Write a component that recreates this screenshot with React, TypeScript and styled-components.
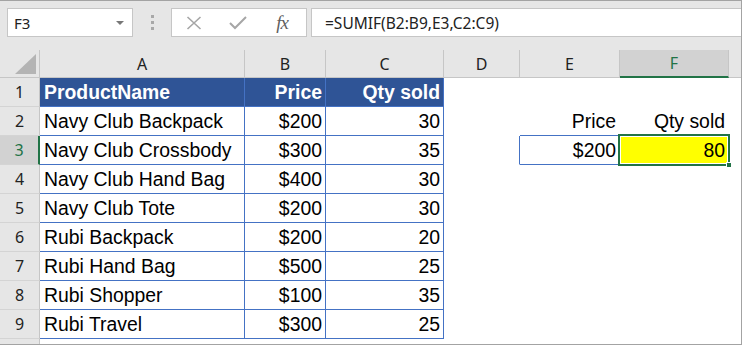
import React from "react";
import styled, { createGlobalStyle } from "styled-components";

const UI_FONT = `"Noto Sans", "Open Sans", sans-serif`;
const CELL_FONT = `"Liberation Sans", Arial, sans-serif`;
const GREEN = "#217346";
const BLUE = "#4472c4";
const HEAD_BLUE = "#2f5496";

const GlobalStyle = createGlobalStyle`
  html, body {
    margin: 0;
    padding: 0;
    background: #fff;
  }
  body {
    width: 742px;
    height: 345px;
    overflow: hidden;
  }
`;

const Frame = styled.div`
  width: 742px;
  height: 345px;
  box-sizing: border-box;
  border: 1px solid #a3a3a3;
  border-left: none;
  display: flex;
  flex-direction: column;
  background: #e6e6e6;
  overflow: hidden;
`;

const FormulaBar = styled.div`
  height: 49px;
  flex-shrink: 0;
  box-sizing: border-box;
  padding: 7px 0 0 7px;
  display: flex;
  align-items: flex-start;
`;

const NameBox = styled.div`
  width: 126px;
  height: 29px;
  box-sizing: border-box;
  background: #fff;
  border: 1px solid #c6c6c6;
  display: flex;
  align-items: center;
  justify-content: space-between;
  padding: 0 8px 0 6px;
  font: 15px ${UI_FONT};
  color: #222;
`;

const Caret = styled.span`
  width: 0;
  height: 0;
  border-left: 4px solid transparent;
  border-right: 4px solid transparent;
  border-top: 4px solid #777;
`;

const Grip = styled.div`
  width: 38px;
  height: 29px;
  display: flex;
  flex-direction: column;
  align-items: center;
  justify-content: center;
  gap: 3px;

  span {
    width: 3px;
    height: 3px;
    background: #a8a8a8;
  }
`;

const FxButtons = styled.div`
  width: 136px;
  height: 29px;
  box-sizing: border-box;
  background: #fff;
  border: 1px solid #c6c6c6;
  display: flex;
  align-items: center;
`;

const FxSlot = styled.div`
  width: 44px;
  height: 100%;
  display: flex;
  align-items: center;
  justify-content: center;
`;

const FxLabel = styled.span`
  font: italic 19px "Liberation Serif", serif;
  color: #5f5f5f;
  letter-spacing: -1px;
`;

const FormulaInput = styled.div`
  flex: 1;
  height: 29px;
  margin-left: 4px;
  box-sizing: border-box;
  background: #fff;
  border: 1px solid #c6c6c6;
  border-right: none;
  padding-left: 13px;
  display: flex;
  align-items: center;
  font: 15.5px ${UI_FONT};
  color: #222;
`;

const Sheet = styled.div`
  flex: 1;
  display: grid;
  grid-template-columns: 40px 205px 81px 118px 76px 100px 109px 1fr;
  grid-template-rows: 28px repeat(9, 29px) 1fr;
  background: #fff;
`;

const Corner = styled.div`
  background: #e6e6e6;
  border-right: 1px solid #c6c6c6;
  border-bottom: 1px solid #c6c6c6;
  display: flex;
  align-items: flex-end;
  justify-content: flex-end;
  padding: 0 3px 3px 0;
`;

const ColHead = styled.div<{ $selected?: boolean; $last?: boolean }>`
  background: ${({ $selected }) => ($selected ? "#d2d2d2" : "#e6e6e6")};
  border-right: ${({ $last }) => ($last ? "none" : "1px solid #c6c6c6")};
  border-bottom: ${({ $selected }) =>
    $selected ? `2px solid ${GREEN}` : "1px solid #c6c6c6"};
  display: flex;
  align-items: center;
  justify-content: center;
  font: 16px ${UI_FONT};
  color: ${({ $selected }) => ($selected ? GREEN : "#222")};
`;

const RowHead = styled.div<{ $selected?: boolean }>`
  background: ${({ $selected }) => ($selected ? "#d2d2d2" : "#e6e6e6")};
  border-right: ${({ $selected }) =>
    $selected ? `2px solid ${GREEN}` : "1px solid #c6c6c6"};
  border-bottom: 1px solid #d4d4d4;
  display: flex;
  align-items: center;
  justify-content: center;
  font: 16px ${UI_FONT};
  color: ${({ $selected }) => ($selected ? GREEN : "#222")};
`;

type CellProps = {
  $right?: boolean;
  $bold?: boolean;
  $bg?: string;
  $color?: string;
  $br?: string;
  $bb?: string;
  $active?: boolean;
};

const Cell = styled.div<CellProps>`
  position: ${({ $active }) => ($active ? "relative" : "static")};
  background: ${({ $bg }) => $bg ?? "#fff"};
  border-right: 1px solid ${({ $br }) => $br ?? "transparent"};
  border-bottom: 1px solid ${({ $bb }) => $bb ?? "transparent"};
  display: flex;
  align-items: center;
  justify-content: ${({ $right }) => ($right ? "flex-end" : "flex-start")};
  padding: ${({ $right }) => ($right ? "1px 3px 0 0" : "1px 0 0 4px")};
  font-family: ${CELL_FONT};
  font-size: 19.4px;
  font-weight: ${({ $bold }) => ($bold ? 700 : 400)};
  color: ${({ $color }) => $color ?? "#000"};
  white-space: nowrap;

  ${({ $active }) =>
    $active &&
    `
    &::after {
      content: "";
      position: absolute;
      top: -2px;
      left: -2px;
      right: -2px;
      bottom: -2px;
      border: 2px solid ${GREEN};
      box-shadow: inset 0 0 0 1px #fff;
      z-index: 1;
      pointer-events: none;
    }
    &::before {
      content: "";
      position: absolute;
      right: -4px;
      bottom: -4px;
      width: 6px;
      height: 6px;
      background: ${GREEN};
      border: 1px solid #fff;
      box-sizing: border-box;
      z-index: 2;
    }
  `}
`;

const Filler = styled.div`
  background: #fff;
`;

const BottomRowHead = styled.div`
  background: #e6e6e6;
  border-right: 1px solid #c6c6c6;
`;

const CancelIcon = () => (
  <svg width="16" height="14" viewBox="0 0 16 14">
    <path d="M1.5 1 L14.5 13 M14.5 1 L1.5 13" stroke="#a6a6a6" strokeWidth="1.6" fill="none" />
  </svg>
);

const EnterIcon = () => (
  <svg width="18" height="14" viewBox="0 0 18 14">
    <path d="M1 7 L6 12 L17 1" stroke="#a6a6a6" strokeWidth="2" fill="none" />
  </svg>
);

const CornerTriangle = () => (
  <svg width="21" height="20" viewBox="0 0 21 20">
    <polygon points="21,0 21,20 0,20" fill="#b4b4b4" />
  </svg>
);

const products: [string, string, string][] = [
  ["Navy Club Backpack", "$200", "30"],
  ["Navy Club Crossbody", "$300", "35"],
  ["Navy Club Hand Bag", "$400", "30"],
  ["Navy Club Tote", "$200", "30"],
  ["Rubi Backpack", "$200", "20"],
  ["Rubi Hand Bag", "$500", "25"],
  ["Rubi Shopper", "$100", "35"],
  ["Rubi Travel", "$300", "25"],
];

const columns = ["A", "B", "C", "D", "E", "F"];

const App = () => {
  const dataRows = products.map(([name, price, qty], i) => {
    const row = i + 2;
    return (
      <React.Fragment key={row}>
        <RowHead $selected={row === 3}>{row}</RowHead>
        <Cell $br={BLUE} $bb={BLUE}>{name}</Cell>
        <Cell $right $br={BLUE} $bb={BLUE}>{price}</Cell>
        <Cell $right $br={BLUE} $bb={BLUE}>{qty}</Cell>
        <Cell $br={row === 3 ? BLUE : undefined} />
        {row === 2 && <Cell $right $bb={BLUE}>Price</Cell>}
        {row === 2 && <Cell $right>Qty sold</Cell>}
        {row === 3 && <Cell $right $br={BLUE} $bb={BLUE}>$200</Cell>}
        {row === 3 && (
          <Cell $right $active $bg="#ffff00">
            80
          </Cell>
        )}
        {row > 3 && <Cell />}
        {row > 3 && <Cell />}
        <Filler />
      </React.Fragment>
    );
  });

  return (
    <>
      <GlobalStyle />
      <Frame>
        <FormulaBar>
          <NameBox>
            <span>F3</span>
            <Caret />
          </NameBox>
          <Grip>
            <span />
            <span />
            <span />
          </Grip>
          <FxButtons>
            <FxSlot>
              <CancelIcon />
            </FxSlot>
            <FxSlot>
              <EnterIcon />
            </FxSlot>
            <FxSlot>
              <FxLabel>fx</FxLabel>
            </FxSlot>
          </FxButtons>
          <FormulaInput>=SUMIF(B2:B9,E3,C2:C9)</FormulaInput>
        </FormulaBar>
        <Sheet>
          <Corner>
            <CornerTriangle />
          </Corner>
          {columns.map((c) => (
            <ColHead key={c} $selected={c === "F"}>
              {c}
            </ColHead>
          ))}
          <ColHead $last />

          <RowHead>1</RowHead>
          <Cell $bold $bg={HEAD_BLUE} $color="#fff" $br={BLUE} $bb={BLUE}>
            ProductName
          </Cell>
          <Cell $right $bold $bg={HEAD_BLUE} $color="#fff" $br={BLUE} $bb={BLUE}>
            Price
          </Cell>
          <Cell $right $bold $bg={HEAD_BLUE} $color="#fff" $br={BLUE} $bb={BLUE}>
            Qty sold
          </Cell>
          <Cell />
          <Cell />
          <Cell />
          <Filler />

          {dataRows}

          <BottomRowHead />
          <Filler />
          <Filler />
          <Filler />
          <Filler />
          <Filler />
          <Filler />
          <Filler />
        </Sheet>
      </Frame>
    </>
  );
};

export default App;
